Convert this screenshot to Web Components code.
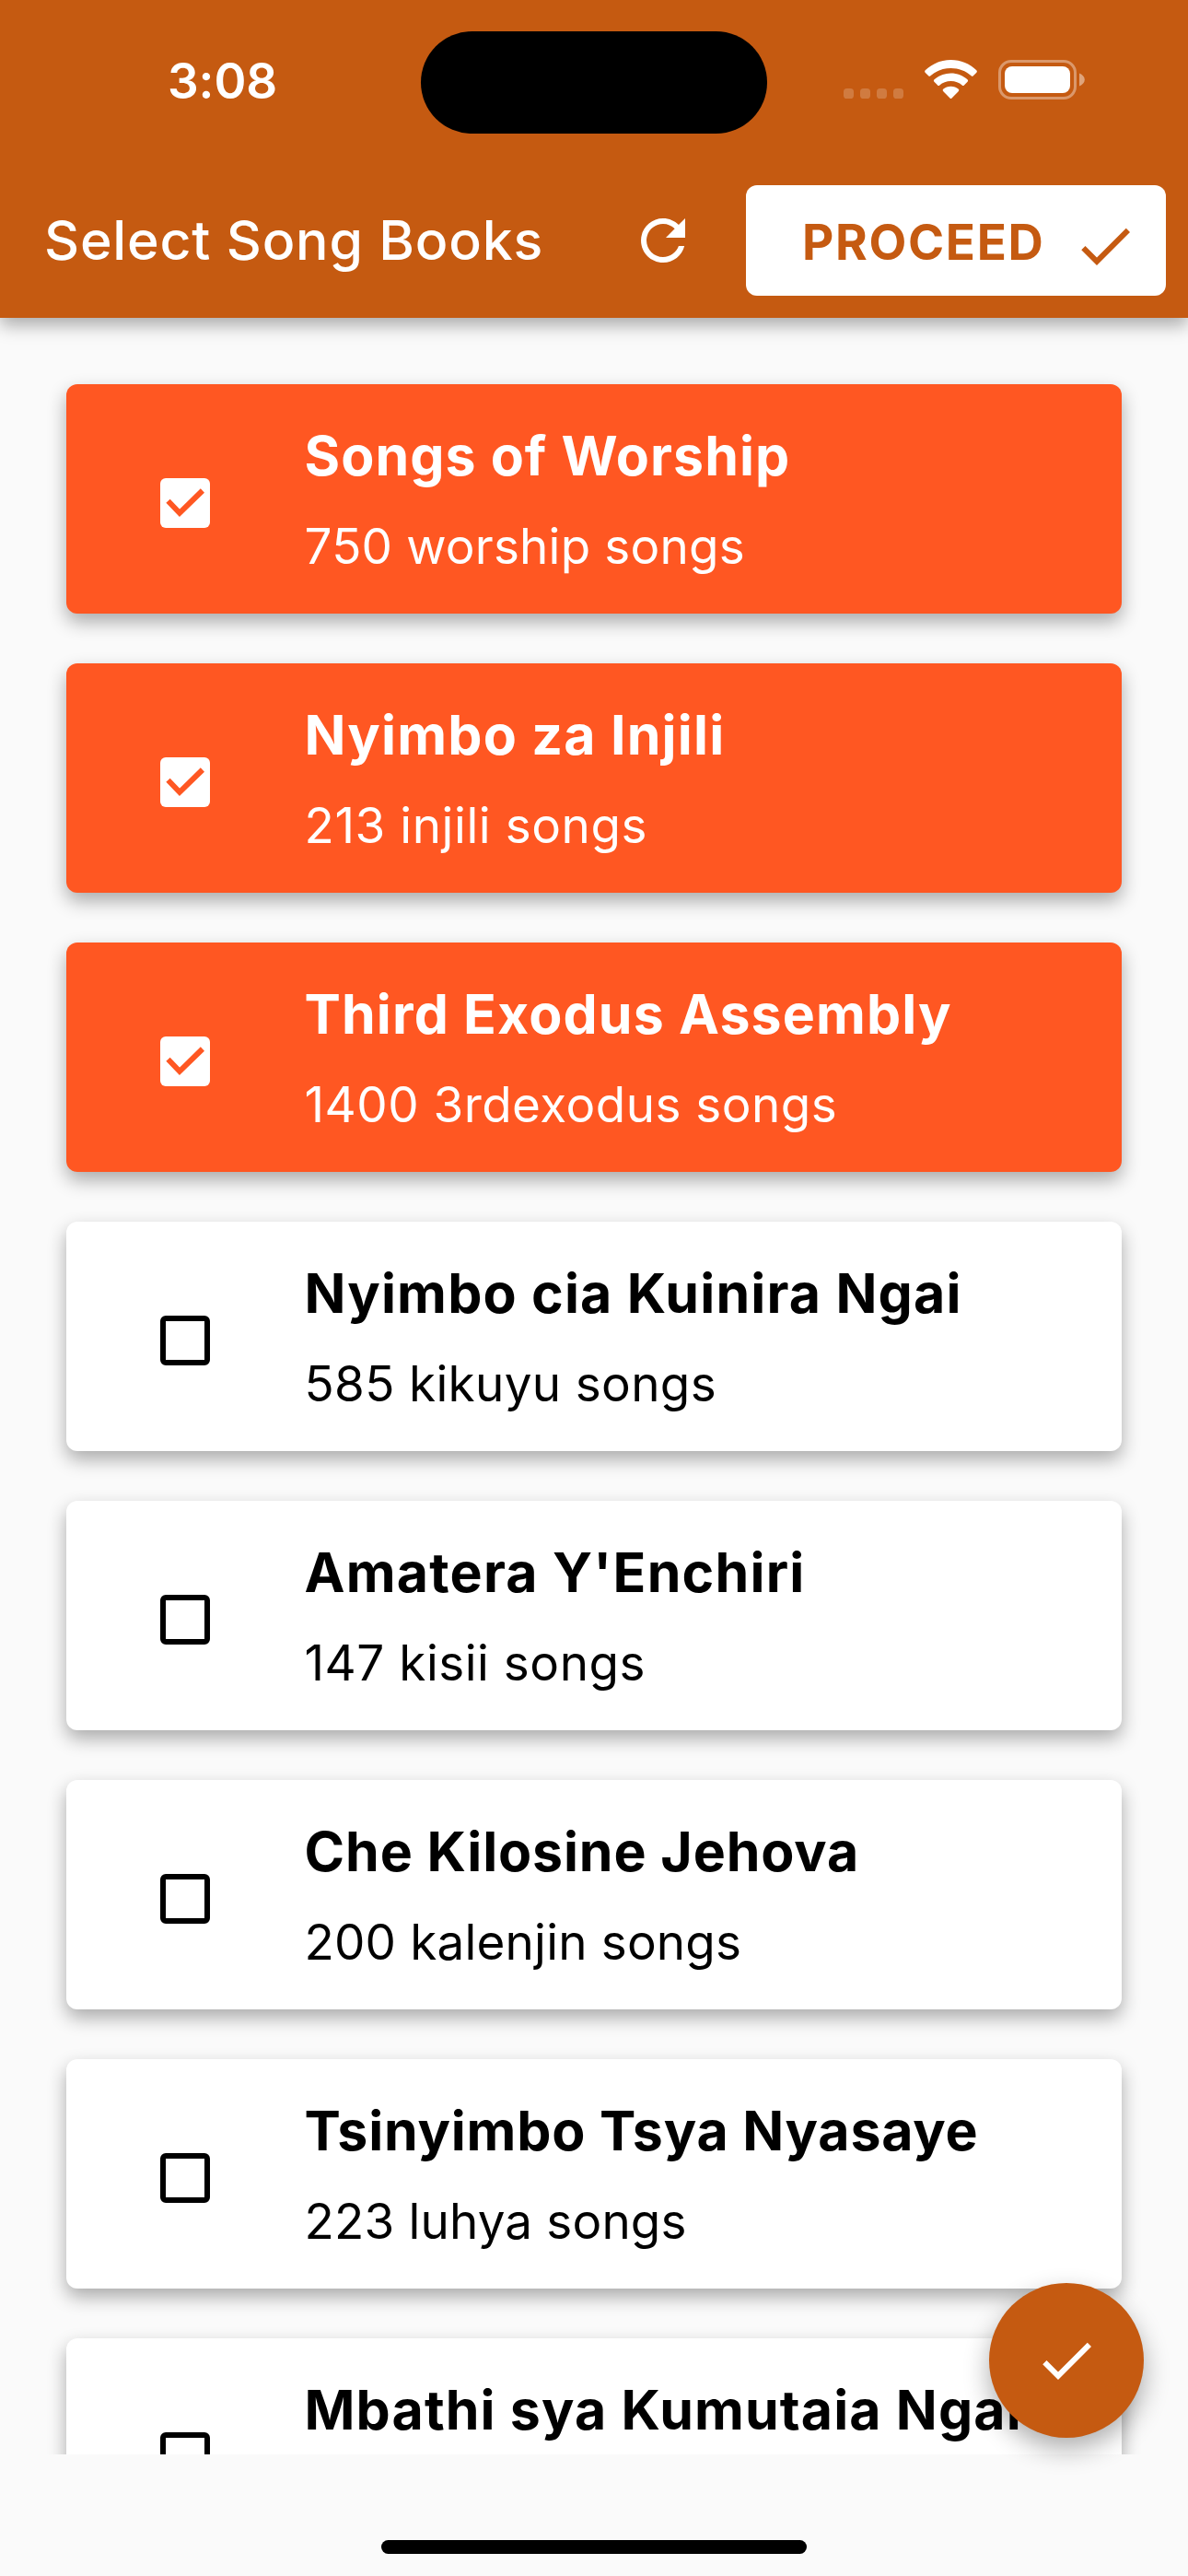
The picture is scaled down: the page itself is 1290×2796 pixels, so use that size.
<!DOCTYPE html>
<html lang="en">
<head>
<meta charset="utf-8">
<title>Select Song Books</title>
<style>
  html, body { margin: 0; padding: 0; }
  body { width: 1290px; height: 2796px; overflow: hidden; background: #fafafa; font-family: Inter, "Liberation Sans", sans-serif; color: #000; }
</style>
</head>
<body>
<song-app>
  <status-bar slot="header" time="3:08"></status-bar>
  <tool-bar slot="header">Select Song Books
    <app-icon slot="action" name="refresh"></app-icon>
    <proceed-button slot="action">PROCEED</proceed-button>
  </tool-bar>
  <song-card checked style="--t:1.05px;--s:.18px">Songs of Worship<span slot="sub">750 worship songs</span></song-card>
  <song-card checked style="--t:1.21px;--s:.57px">Nyimbo za Injili<span slot="sub">213 injili songs</span></song-card>
  <song-card checked style="--t:1.12px;--s:.47px">Third Exodus Assembly<span slot="sub">1400 3rdexodus songs</span></song-card>
  <song-card style="--t:1.18px;--s:.34px">Nyimbo cia Kuinira Ngai<span slot="sub">585 kikuyu songs</span></song-card>
  <song-card style="--t:1.22px;--s:.52px">Amatera Y'Enchiri<span slot="sub">147 kisii songs</span></song-card>
  <song-card style="--t:.88px;--s:.18px">Che Kilosine Jehova<span slot="sub">200 kalenjin songs</span></song-card>
  <song-card style="--t:.8px;--s:.16px">Tsinyimbo Tsya Nyasaye<span slot="sub">223 luhya songs</span></song-card>
  <song-card style="--t:1.13px">Mbathi sya Kumutaia Ngai</song-card>
  <fab-button slot="fab"></fab-button>
</song-app>
<script>
const define = (name, html, setup) => customElements.define(name, class extends HTMLElement {
  connectedCallback() {
    if (this.shadowRoot) return;
    const root = this.attachShadow({ mode: 'open' });
    const t = document.createElement('template');
    t.innerHTML = html;
    root.append(t.content.cloneNode(true));
    if (setup) setup(this, root);
  }
});

const ICONS = {
  check: 'M9 16.17L4.83 12l-1.42 1.41L9 19 21 7l-1.41-1.41z',
  refresh: 'M17.65 6.35C16.2 4.9 14.21 4 12 4c-4.42 0-7.99 3.58-7.99 8s3.57 8 7.99 8c3.73 0 6.84-2.55 7.73-6h-2.08c-.82 2.33-3.04 4-5.65 4-3.31 0-6-2.69-6-6s2.69-6 6-6c1.66 0 3.14.69 4.22 1.78L13 11h7V4l-2.35 2.35z'
};

define('app-icon', `
  <style>:host{display:block;width:72px;height:72px;flex:none} svg{display:block;width:100%;height:100%;fill:currentColor}</style>
  <svg viewBox="0 0 24 24"><path/></svg>`,
  (el, root) => root.querySelector('path').setAttribute('d', ICONS[el.getAttribute('name')]));

define('status-bar', `
  <style>
    :host{display:flex;height:177px;color:#fff}
    .time{width:275px;padding-left:182px;font-size:53px;font-weight:600;line-height:177px;letter-spacing:-.1px}
    .island{width:376px;height:111px;border-radius:56px;background:#000;margin-top:33.5px}
    .right{display:flex;padding:65px 0 0 83px}
    svg{display:block}
    .dots{margin:31px 23px 0 0}
    .wifi{margin-right:23px}
  </style>
  <div class="time"></div>
  <div class="island"></div>
  <div class="right">
    <svg class="dots" width="65" height="11" fill="#fff" fill-opacity=".2">
      <rect width="11" height="11" rx="3.6"/><rect x="18" width="11" height="11" rx="3.6"/><rect x="36" width="11" height="11" rx="3.6"/><rect x="54" width="11" height="11" rx="3.6"/>
    </svg>
    <svg class="wifi" width="57" height="43" viewBox="0 0 57 43" fill="#fff">
      <path d="M28.5 0C39.300 0 49.100 4.200 56.300 11.300Q57.400 12.500 56.400 13.700L52.800 17.300Q51.700 18.300 50.600 17.300C44.800 12 37 9 28.500 9S12.200 12 6.400 17.300Q5.300 18.300 4.200 17.300L.6 13.700Q-.4 12.500 .7 11.300C7.900 4.200 17.700 0 28.500 0Z"/>
      <path d="M28.500 14.400C35.400 14.400 41.700 17 46.500 21.300Q47.700 22.500 46.600 23.700L42.900 27.400Q41.800 28.400 40.700 27.400C37.500 24.600 33.200 23 28.500 23S19.500 24.600 16.300 27.400Q15.200 28.400 14.100 27.400L10.400 23.700Q9.300 22.500 10.500 21.300C15.300 17 21.600 14.400 28.500 14.400Z"/>
      <path d="M28.500 28.700C31.700 28.700 34.600 29.800 36.800 31.700Q37.900 32.800 36.900 33.900L29.500 41.500Q28.500 42.500 27.500 41.500L20.100 33.900Q19.100 32.800 20.200 31.700C22.400 29.800 25.300 28.700 28.500 28.700Z"/>
    </svg>
    <svg width="95" height="43" fill="#fff">
      <rect x="1.500" y="1.500" width="82" height="40" rx="12.500" fill="none" stroke="#fff" stroke-opacity=".38" stroke-width="3"/>
      <rect x="7" y="7" width="71" height="29" rx="8"/>
      <path d="M88 14.500C91.500 16 93.800 18.500 93.800 21.500S91.500 27 88 28.500Z" fill-opacity=".45"/>
    </svg>
  </div>`,
  (el, root) => root.querySelector('.time').textContent = el.getAttribute('time'));

define('tool-bar', `
  <style>
    :host{display:flex;align-items:center;justify-content:space-between;height:168px;padding:0 24px 0 48px;color:#fff}
    .title{font-size:59px;font-weight:500;line-height:167px;padding-bottom:1px;letter-spacing:.8px;white-space:nowrap}
    .actions{display:flex;align-items:center;gap:54px}
  </style>
  <div class="title"><slot></slot></div>
  <div class="actions"><slot name="action"></slot></div>`);

define('proceed-button', `
  <style>
    :host{display:flex;box-sizing:border-box;width:456px;height:120px;padding-left:61px;border-radius:12px;background:#fff;color:#c55a11;font-weight:700;font-size:53px;letter-spacing:1.65px}
    .label{width:293px;line-height:124px}
    app-icon{margin-top:30px}
  </style>
  <div class="label"><slot></slot></div><app-icon name="check"></app-icon>`);

define('song-card', `
  <style>
    :host{display:flex;height:249px;border-radius:12px;background:#fff;color:#000;box-shadow:0 9px 20px rgba(0,0,0,.32);flex:none}
    :host([checked]){background:#ff5722;color:#fff}
    .box{box-sizing:border-box;width:54px;height:54px;margin:102px 102.5px 0 102px;border:6px solid #000;border-radius:6px;flex:none}
    svg{display:none}
    :host([checked]) .box{border:0;background:#fff}
    :host([checked]) svg{display:block}
    .text{padding-top:42px;white-space:nowrap}
    .title{font-size:59px;font-weight:700;line-height:71px;letter-spacing:var(--t)}
    .sub{margin-top:30px;font-size:53px;line-height:66px;letter-spacing:var(--s)}
  </style>
  <div class="box"><svg width="54" height="54" fill="none" stroke="#ff5722" stroke-width="6"><path d="M8.500 24.700L21 37.800L45.900 13.500"/></svg></div>
  <div class="text"><div class="title"><slot></slot></div><div class="sub"><slot name="sub"></slot></div></div>`);

define('fab-button', `
  <style>
    :host{display:flex;align-items:center;justify-content:center;width:168px;height:168px;border-radius:50%;background:#c55a11;color:#fff;box-shadow:0 12px 28px rgba(0,0,0,.32)}
  </style>
  <app-icon name="check"></app-icon>`);

define('song-app', `
  <style>
    :host{display:flex;flex-direction:column;position:relative;width:1290px;height:2796px;background:#fafafa}
    header{position:relative;z-index:1;height:345px;flex:none;background:#c55a11;box-shadow:0 8px 18px rgba(0,0,0,.32)}
    main{display:flex;flex-direction:column;gap:54px;box-sizing:border-box;height:2319px;padding:72px 72px 0;overflow:hidden;flex:none}
    footer{display:flex;justify-content:center;height:132px}
    .home{width:462px;height:15px;margin-top:93px;border-radius:8px;background:#000}
    .fab{position:absolute;right:48px;bottom:150px}
  </style>
  <header><slot name="header"></slot></header>
  <main><slot></slot></main>
  <footer><div class="home"></div></footer>
  <div class="fab"><slot name="fab"></slot></div>`);
</script>
</body>
</html>
